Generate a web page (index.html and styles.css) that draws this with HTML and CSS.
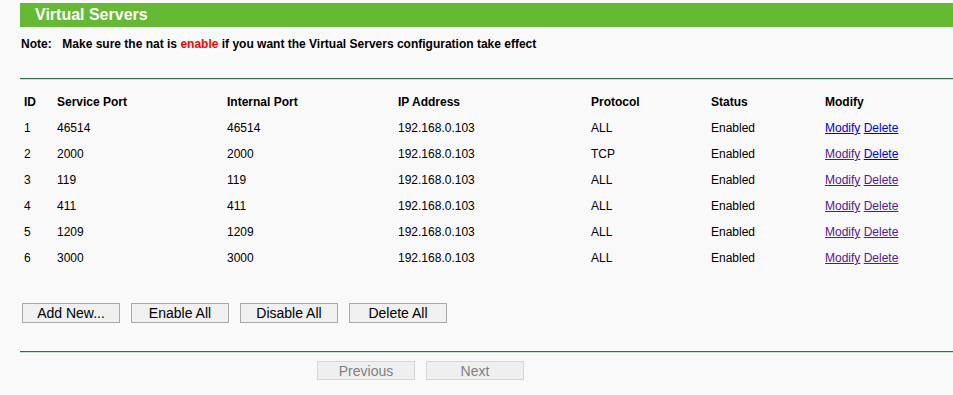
FILE: index.html
```
<!DOCTYPE html>
<html lang="en">

<head>
    <meta charset="UTF-8">
    <title>Virtual Servers</title>
    <link rel="stylesheet" href="styles.css">
</head>

<body>
    <div class="page">
        <div class="title-bar">Virtual Servers</div>
        <div class="note">
            <span class="note-label">Note:</span>
            Make sure the nat is <span class="red">enable</span> if you want the Virtual Servers configuration take effect
        </div>

        <div class="rule"></div>

        <table class="servers">
            <colgroup>
                <col class="c-id">
                <col class="c-sport">
                <col class="c-iport">
                <col class="c-ip">
                <col class="c-proto">
                <col class="c-status">
                <col>
            </colgroup>
            <tr class="head">
                <td>ID</td>
                <td>Service Port</td>
                <td>Internal Port</td>
                <td>IP Address</td>
                <td>Protocol</td>
                <td>Status</td>
                <td>Modify</td>
            </tr>
            <tr>
                <td>1</td><td>46514</td><td>46514</td><td>192.168.0.103</td><td>ALL</td><td>Enabled</td>
                <td><a href="#" class="link">Modify</a> <a href="#" class="link">Delete</a></td>
            </tr>
            <tr>
                <td>2</td><td>2000</td><td>2000</td><td>192.168.0.103</td><td>TCP</td><td>Enabled</td>
                <td><a href="#" class="link visited">Modify</a> <a href="#" class="link">Delete</a></td>
            </tr>
            <tr>
                <td>3</td><td>119</td><td>119</td><td>192.168.0.103</td><td>ALL</td><td>Enabled</td>
                <td><a href="#" class="link visited">Modify</a> <a href="#" class="link visited">Delete</a></td>
            </tr>
            <tr>
                <td>4</td><td>411</td><td>411</td><td>192.168.0.103</td><td>ALL</td><td>Enabled</td>
                <td><a href="#" class="link visited">Modify</a> <a href="#" class="link visited">Delete</a></td>
            </tr>
            <tr>
                <td>5</td><td>1209</td><td>1209</td><td>192.168.0.103</td><td>ALL</td><td>Enabled</td>
                <td><a href="#" class="link visited">Modify</a> <a href="#" class="link visited">Delete</a></td>
            </tr>
            <tr>
                <td>6</td><td>3000</td><td>3000</td><td>192.168.0.103</td><td>ALL</td><td>Enabled</td>
                <td><a href="#" class="link visited">Modify</a> <a href="#" class="link visited">Delete</a></td>
            </tr>
        </table>

        <div class="actions">
            <button class="btn">Add New...</button>
            <button class="btn">Enable All</button>
            <button class="btn">Disable All</button>
            <button class="btn">Delete All</button>
        </div>

        <div class="rule"></div>

        <div class="pager">
            <button class="btn" disabled>Previous</button>
            <button class="btn" disabled>Next</button>
        </div>
    </div>
</body>

</html>
```

FILE: styles.css
```
* {
    margin: 0;
    padding: 0;
    box-sizing: border-box;
}

html,
body {
    background-color: #f9f9f9;
    font-family: "Liberation Sans", Arial, sans-serif;
    font-size: 12px;
    color: #000;
}

.page {
    padding: 3px 0 0 20px;
}

.title-bar {
    height: 24px;
    line-height: 24px;
    padding-left: 15px;
    background-color: #66b933;
    color: #fff;
    font-size: 16px;
    font-weight: bold;
}

.note {
    margin: 8px 0 0 1px;
    height: 18px;
    line-height: 18px;
    font-weight: bold;
}

.note-label {
    display: inline-block;
    width: 38px;
}

.red {
    color: #ff0000;
}

.rule {
    height: 2px;
    border-top: 1px solid #2e7148;
    background-color: #cfe3d5;
}

.rule {
    margin-top: 25px;
}

.servers {
    margin-top: 9px;
    width: 100%;
    table-layout: fixed;
    border-collapse: collapse;
}

.c-id {
    width: 33px;
}

.c-sport {
    width: 170px;
}

.c-iport {
    width: 171px;
}

.c-ip {
    width: 193px;
}

.c-proto {
    width: 120px;
}

.c-status {
    width: 114px;
}

.servers td {
    height: 26px;
    padding-left: 4px;
    white-space: nowrap;
    vertical-align: middle;
}

.servers .head td {
    font-weight: bold;
}

.link {
    color: #0000ee;
}

.link.visited {
    color: #551a8b;
}

.actions {
    display: flex;
    gap: 11px;
    margin: 32px 0 0 2px;
}

.btn {
    width: 98px;
    height: 20px;
    font-family: "Liberation Sans", Arial, sans-serif;
    font-size: 14px;
    color: #000;
    background-color: #f0f0f0;
    border: 1px solid #a9a9a9;
}

.actions + .rule {
    margin-top: 28px;
}

.pager {
    display: flex;
    gap: 11px;
    margin: 8px 0 0 297px;
}

.pager .btn {
    height: 19px;
    color: #7f7f7f;
    background-color: #efefef;
    border-color: #d6d6d6;
}
```
